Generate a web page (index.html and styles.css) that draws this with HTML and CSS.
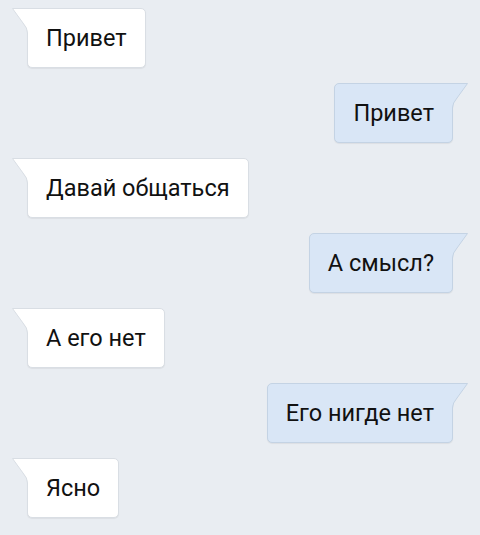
FILE: index.html
```html
<!DOCTYPE html>
<html lang="ru">
<head>
<meta charset="utf-8">
<link rel="stylesheet" href="styles.css">
</head>
<body>
<div class="chat">
  <div class="row in"><div class="bubble"><svg class="tail" width="16" height="25" viewBox="0 0 16 25"><path class="tf" d="M16 0.5 H0.5 L11 15 Q15.5 20 15.5 25 H16 Z"/><path class="ts" d="M16 0.5 H0.5 L11 15 Q15.5 20 15.5 25"/></svg>Привет</div></div>
  <div class="row out"><div class="bubble"><svg class="tail" width="16" height="25" viewBox="0 0 16 25"><path class="tf" d="M0 0.5 H15.5 L5 15 Q0.5 20 0.5 25 H0 Z"/><path class="ts" d="M0 0.5 H15.5 L5 15 Q0.5 20 0.5 25"/></svg>Привет</div></div>
  <div class="row in"><div class="bubble"><svg class="tail" width="16" height="25" viewBox="0 0 16 25"><path class="tf" d="M16 0.5 H0.5 L11 15 Q15.5 20 15.5 25 H16 Z"/><path class="ts" d="M16 0.5 H0.5 L11 15 Q15.5 20 15.5 25"/></svg>Давай общаться</div></div>
  <div class="row out"><div class="bubble"><svg class="tail" width="16" height="25" viewBox="0 0 16 25"><path class="tf" d="M0 0.5 H15.5 L5 15 Q0.5 20 0.5 25 H0 Z"/><path class="ts" d="M0 0.5 H15.5 L5 15 Q0.5 20 0.5 25"/></svg>А смысл?</div></div>
  <div class="row in"><div class="bubble"><svg class="tail" width="16" height="25" viewBox="0 0 16 25"><path class="tf" d="M16 0.5 H0.5 L11 15 Q15.5 20 15.5 25 H16 Z"/><path class="ts" d="M16 0.5 H0.5 L11 15 Q15.5 20 15.5 25"/></svg>А его нет</div></div>
  <div class="row out"><div class="bubble"><svg class="tail" width="16" height="25" viewBox="0 0 16 25"><path class="tf" d="M0 0.5 H15.5 L5 15 Q0.5 20 0.5 25 H0 Z"/><path class="ts" d="M0 0.5 H15.5 L5 15 Q0.5 20 0.5 25"/></svg>Его нигде нет</div></div>
  <div class="row in"><div class="bubble"><svg class="tail" width="16" height="25" viewBox="0 0 16 25"><path class="tf" d="M16 0.5 H0.5 L11 15 Q15.5 20 15.5 25 H16 Z"/><path class="ts" d="M16 0.5 H0.5 L11 15 Q15.5 20 15.5 25"/></svg>Ясно</div></div>
</div>
</body>
</html>
```
FILE: styles.css
```css
html, body {
  margin: 0;
  padding: 0;
  background: #e9edf2;
  width: 480px;
  height: 535px;
  overflow: hidden;
}
.chat {
  display: flex;
  flex-direction: column;
  gap: 15px;
  padding: 8px 27px 0 27px;
  font-family: Roboto, "Noto Sans", sans-serif;
}
.row {
  display: flex;
}
.row.out {
  justify-content: flex-end;
}
.bubble {
  position: relative;
  box-sizing: border-box;
  height: 60px;
  display: flex;
  align-items: center;
  padding: 0 18px 1px 18px;
  font-size: 23.5px;
  color: #111;
  border-radius: 5px;
  border: 1px solid #d9dee4;
  background: #fff;
  box-shadow: 0 1px 1px rgba(0, 0, 0, 0.06);
}
.row.in .bubble {
  border-top-left-radius: 0;
}
.row.out .bubble {
  background: #d9e6f6;
  border-color: #c4d3e4;
  border-top-right-radius: 0;
}
.tail {
  position: absolute;
  top: -1px;
  display: block;
}
.row.in .tail {
  left: -16px;
}
.row.out .tail {
  right: -16px;
}
.tf {
  fill: #fff;
  stroke: none;
}
.ts {
  fill: none;
  stroke: #d9dee4;
  stroke-width: 1;
}
.row.out .tf {
  fill: #d9e6f6;
}
.row.out .ts {
  stroke: #c4d3e4;
}
```
